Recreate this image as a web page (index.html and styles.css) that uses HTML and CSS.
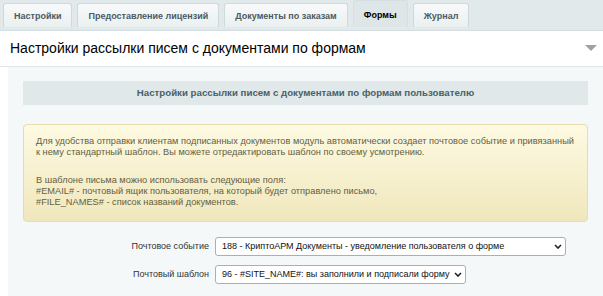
FILE: index.html
```html
<!DOCTYPE html>
<html lang="ru">

<head>
    <title>Настройки</title>
    <meta charset="utf-8">
    <link rel="stylesheet" href="styles.css">
</head>

<body>
    <div class="tabs">
        <div class="tab">Настройки</div>
        <div class="tab">Предоставление лицензий</div>
        <div class="tab">Документы по заказам</div>
        <div class="tab active">Формы</div>
        <div class="tab">Журнал</div>
    </div>
    <div class="panel">
        <div class="panel-head">
            <h2>Настройки рассылки писем с документами по формам</h2>
            <span class="toggle"></span>
        </div>
        <div class="panel-body">
            <div class="section-title">Настройки рассылки писем с документами по формам пользователю</div>
            <div class="note">
                <p>Для удобства отправки клиентам подписанных документов модуль автоматически создает почтовое событие и привязанный к нему стандартный шаблон. Вы можете отредактировать шаблон по своему усмотрению.</p>
                <p>В шаблоне письма можно использовать следующие поля:<br>
                    #EMAIL# - почтовый ящик пользователя, на который будет отправлено письмо,<br>
                    #FILE_NAMES# - список названий документов.</p>
            </div>
            <div class="form">
                <label for="event">Почтовое событие</label>
                <div class="select wide">
                    <select id="event">
                        <option>188 - КриптоАРМ Документы - уведомление пользователя о форме</option>
                    </select>
                    <svg class="chevron" width="8" height="5" viewBox="0 0 8 5"><path d="M1 1l3 3 3-3" fill="none" stroke="#222" stroke-width="1.6"/></svg>
                </div>
                <label for="tpl">Почтовый шаблон</label>
                <div class="select short">
                    <select id="tpl">
                        <option>96 - #SITE_NAME#: вы заполнили и подписали форму</option>
                    </select>
                    <svg class="chevron" width="8" height="5" viewBox="0 0 8 5"><path d="M1 1l3 3 3-3" fill="none" stroke="#222" stroke-width="1.6"/></svg>
                </div>
            </div>
        </div>
    </div>
</body>

</html>
```

FILE: styles.css
```css
* {
    margin: 0;
    padding: 0;
    box-sizing: border-box;
}

body {
    background-color: #fff;
    color: #000;
    font-family: "Liberation Sans", Arial, sans-serif;
    overflow: hidden;
}

/* Tabs */
.tabs {
    display: flex;
    align-items: flex-start;
    gap: 5px;
    padding: 3px 3px 0;
    height: 31px;
    background-color: #e1e9eb;
    border-bottom: 1px solid #d3dcdf;
}

.tab {
    height: 24px;
    padding: 0 10px;
    line-height: 24px;
    font-size: 9px;
    font-weight: bold;
    color: #4c5a63;
    background: linear-gradient(#f8fafa, #eaeff0);
    border: 1px solid #cfd9db;
    border-bottom: none;
    border-radius: 3px 3px 0 0;
}

.tab.active {
    height: 27px;
    margin-top: -3px;
    line-height: 28px;
    color: #000;
    background: #dee6e8;
    border-color: #d6dfe1;
}

/* Panel */
.panel-head {
    display: flex;
    align-items: center;
    justify-content: space-between;
    height: 36px;
    padding: 0 6px 1px 10px;
    border-bottom: 1px solid #dfe6e8;
}

.panel-head h2 {
    font-size: 14px;
    font-weight: normal;
    color: #000;
}

.toggle {
    width: 0;
    height: 0;
    border-left: 6px solid transparent;
    border-right: 6px solid transparent;
    border-top: 6px solid #9aa3a7;
}

.panel-body {
    margin-left: 8px;
    padding: 14px 15px 20px;
    background-color: #f5f8f9;
    min-height: 240px;
}

.section-title {
    height: 24px;
    line-height: 24px;
    text-align: center;
    font-size: 9.7px;
    font-weight: bold;
    color: #4b6168;
    background-color: #e0e8ea;
}

.note {
    margin-top: 19px;
    padding: 11px 12px 12px;
    font-size: 9.25px;
    line-height: 11.2px;
    color: #655e41;
    background: linear-gradient(#fdfae2, #f0e7bc);
    border: 1px solid #e6dcae;
    border-radius: 4px;
}

.note p + p {
    margin-top: 16.5px;
}

/* Form rows */
.form {
    display: grid;
    grid-template-columns: 186px auto;
    justify-content: start;
    align-items: center;
    gap: 9px 6px;
    margin-top: 15px;
    font-size: 9px;
    color: #333;
}

.form label {
    text-align: right;
}

.select {
    position: relative;
    height: 19px;
}

.select.wide {
    width: 351px;
}

.select.short {
    width: 251px;
}

.select select {
    appearance: none;
    width: 100%;
    height: 100%;
    padding: 0 14px 0 6px;
    font-family: "Liberation Sans", Arial, sans-serif;
    font-size: 9px;
    color: #111;
    background-color: #fff;
    border: 1px solid #a9b0b3;
    border-radius: 3px;
}

.chevron {
    position: absolute;
    right: 4px;
    top: 7px;
    pointer-events: none;
}
```
